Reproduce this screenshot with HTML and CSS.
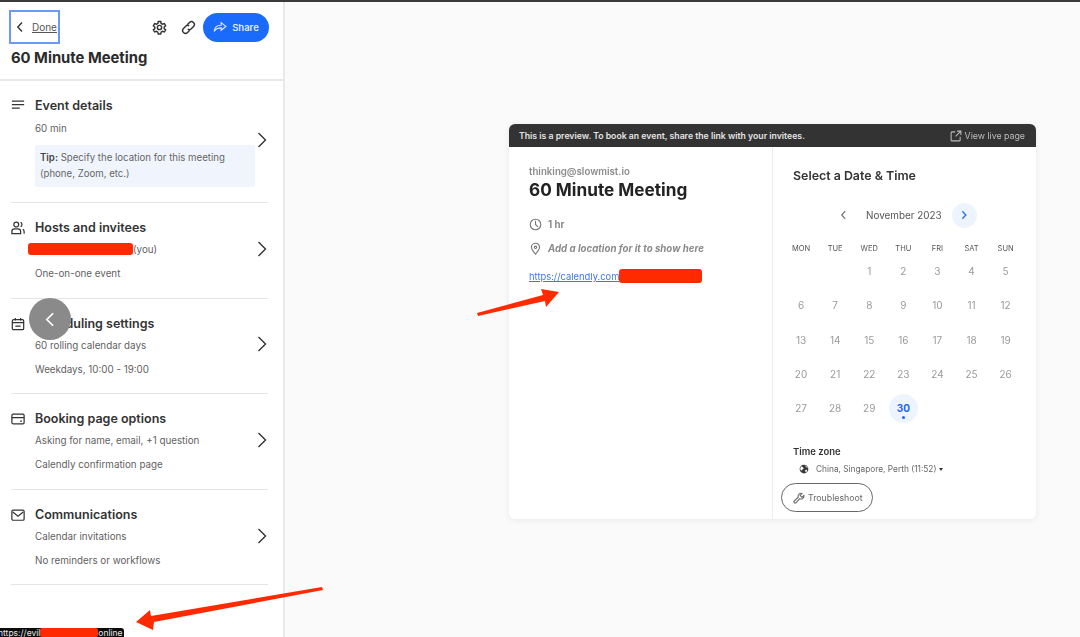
FILE: index.html
```html
<!DOCTYPE html>
<html lang="en">
<head>
  <meta charset="UTF-8">
  <title>60 Minute Meeting</title>
  <link rel="stylesheet" href="styles.css">
</head>
<body>
  <div class="page">
    <!-- SIDEBAR -->
    <aside class="sidebar">
      <header class="side-head">
        <div class="side-top">
          <a class="done">
            <svg class="ico-back" viewBox="0 0 8 12"><path d="M6 1.500 1.800 6 6 10.500"/></svg>
            <span>Done</span>
          </a>
          <svg class="ico-tool ico-gear" viewBox="0 0 24 24">
            <path d="M10 2.500h4l.6 3 2.300 1.300 2.900-1 2 3.400-2.300 2 0 2.600 2.300 2-2 3.400-2.900-1-2.300 1.300-.6 3h-4l-.6-3-2.300-1.300-2.900 1-2-3.400 2.300-2 0-2.600-2.300-2 2-3.400 2.900 1 2.300-1.300z"/>
            <circle cx="12" cy="12" r="3.400"/>
          </svg>
          <svg class="ico-tool ico-link" viewBox="0 0 24 24">
            <path d="M10 7.500 13.500 4a4.200 4.200 0 0 1 6.500 6.500L16.500 14a4.200 4.200 0 0 1-5.500.5"/>
            <path d="M14 16.500 10.500 20A4.200 4.200 0 0 1 4 13.500L7.500 10a4.200 4.200 0 0 1 5.500-.5"/>
          </svg>
          <button class="share">
            <svg viewBox="0 0 24 24"><path d="M14 4.500 22 11l-8 6.500v-4c-5 0-9 1-12 6 .5-6.500 5-10.500 12-10.500z"/></svg>
            Share
          </button>
        </div>
        <h1>60 Minute Meeting</h1>
      </header>

      <section class="item item-first">
        <svg class="item-ico" viewBox="0 0 16 16"><path d="M1 3.500h14M1 7.500h14M1 11.500h9"/></svg>
        <div class="item-body">
          <h2>Event details</h2>
          <p>60 min</p>
          <div class="tip"><b>Tip:</b> Specify the location for this meeting (phone, Zoom, etc.)</div>
        </div>
        <svg class="item-arrow" viewBox="0 0 10 16"><path d="M1.500 1 8.500 8l-7 7"/></svg>
      </section>

      <section class="item">
        <svg class="item-ico" viewBox="0 0 16 16"><circle cx="6" cy="4" r="2.800"/><path d="M1 14.500v-2.500a3 3 0 0 1 3-3h4a3 3 0 0 1 3 3v2.500zM11 1.500a2.800 2.800 0 0 1 0 5M13.500 9.500a3 3 0 0 1 1.500 2.500v2.500"/></svg>
        <div class="item-body">
          <h2>Hosts and invitees</h2>
          <p><span class="redact redact-host"></span>(you)</p>
          <p>One-on-one event</p>
        </div>
        <svg class="item-arrow" viewBox="0 0 10 16"><path d="M1.500 1 8.500 8l-7 7"/></svg>
      </section>

      <section class="item">
        <svg class="item-ico" viewBox="0 0 16 16"><rect x="1.500" y="3" width="13" height="11.500" rx="1.500"/><path d="M1.500 6.500h13M5 1v3M11 1v3M5 10.500h6"/></svg>
        <div class="item-body">
          <h2>Scheduling settings</h2>
          <p>60 rolling calendar days</p>
          <p>Weekdays, 10:00 - 19:00</p>
        </div>
        <svg class="item-arrow" viewBox="0 0 10 16"><path d="M1.500 1 8.500 8l-7 7"/></svg>
      </section>

      <section class="item">
        <svg class="item-ico" viewBox="0 0 16 16"><rect x="1" y="2.500" width="14" height="11" rx="1.500"/><path d="M1 6.500h14M10.500 10.500h2"/></svg>
        <div class="item-body">
          <h2>Booking page options</h2>
          <p>Asking for name, email, +1 question</p>
          <p>Calendly confirmation page</p>
        </div>
        <svg class="item-arrow" viewBox="0 0 10 16"><path d="M1.500 1 8.500 8l-7 7"/></svg>
      </section>

      <section class="item">
        <svg class="item-ico" viewBox="0 0 16 16"><rect x="1" y="2.500" width="14" height="11.500" rx="1.500"/><path d="m2 4.500 6 5 6-5"/></svg>
        <div class="item-body">
          <h2>Communications</h2>
          <p>Calendar invitations</p>
          <p>No reminders or workflows</p>
        </div>
        <svg class="item-arrow" viewBox="0 0 10 16"><path d="M1.500 1 8.500 8l-7 7"/></svg>
      </section>
    </aside>

    <!-- PREVIEW -->
    <main class="preview">
      <div class="card">
        <div class="card-bar">
          <b>This is a preview. To book an event, share the link with your invitees.</b>
          <span class="live">
            <svg viewBox="0 0 16 16"><path d="M7 2.500H2.500a1 1 0 0 0-1 1v10a1 1 0 0 0 1 1h10a1 1 0 0 0 1-1V9M9.500 1.500h5v5M14.500 1.500 7.500 8.500"/></svg>
            View live page
          </span>
        </div>
        <div class="card-body">
          <div class="pane-info">
            <div class="owner">thinking@slowmist.io</div>
            <div class="meeting">60 Minute Meeting</div>
            <div class="fact">
              <svg viewBox="0 0 16 16"><circle cx="8" cy="8" r="6.500"/><path d="M8 3.500V8l3 3"/></svg>
              <b>1 hr</b>
            </div>
            <div class="fact fact-loc">
              <svg viewBox="0 0 16 16"><path d="M8 15c-3-3.500-5-6-5-8.500a5 5 0 0 1 10 0C13 9 11 11.500 8 15z"/><circle cx="8" cy="6.500" r="1.500"/></svg>
              <b><i>Add a location for it to show here</i></b>
            </div>
            <div class="link-row"><a>https://calendly.com</a><span class="redact redact-link"></span></div>
          </div>
          <div class="pane-cal">
            <h3>Select a Date &amp; Time</h3>
            <div class="month">
              <svg class="month-prev" viewBox="0 0 8 12"><path d="M6 1.500 1.800 6 6 10.500"/></svg>
              <span>November 2023</span>
              <span class="month-next"><svg viewBox="0 0 8 12"><path d="M2 1.500 6.200 6 2 10.500"/></svg></span>
            </div>
            <div class="weekdays">
              <div>MON</div><div>TUE</div><div>WED</div><div>THU</div><div>FRI</div><div>SAT</div><div>SUN</div>
            </div>
            <div class="days">
              <div></div><div></div>
              <div>1</div><div>2</div><div>3</div><div>4</div><div>5</div>
              <div>6</div><div>7</div><div>8</div><div>9</div><div>10</div><div>11</div><div>12</div>
              <div>13</div><div>14</div><div>15</div><div>16</div><div>17</div><div>18</div><div>19</div>
              <div>20</div><div>21</div><div>22</div><div>23</div><div>24</div><div>25</div><div>26</div>
              <div>27</div><div>28</div><div>29</div><div class="today">30</div>
            </div>
            <div class="tz-label">Time zone</div>
            <div class="tz">
              <svg viewBox="0 0 16 16"><circle cx="8" cy="8" r="7" fill="#3a3a3a"/><path d="M3 4c2 0 3 1 4 2s0 2-1 2.500-1 2-2 2-2-2-2-3M10 2c0 2 1 2 2 3s2 1 2.500 1M10 10c1-1 3-1 3 0s-1 3-2 3-1-2-1-3z" fill="#fff"/></svg>
              <span>China, Singapore, Perth (11:52)</span>
              <span class="caret"></span>
            </div>
            <button class="trouble">
              <svg viewBox="0 0 16 16"><path d="M14.500 4.500 12 7 9.500 4.500 12 2a4 4 0 0 0-5 5L1.500 12a1.800 1.800 0 0 0 2.500 2.500L9 9a4 4 0 0 0 5.500-4.500z"/></svg>
              Troubleshoot
            </button>
          </div>
        </div>
      </div>
    </main>
  </div>

  <!-- over the page: swipe button, status tooltip, markup arrows -->
  <div class="swipe"><svg viewBox="0 0 8 12"><path d="M6.500 1 1.500 6l5 5"/></svg></div>
  <div class="status">https://evil<span class="redact redact-status"></span>online</div>
  <svg class="marks" viewBox="0 0 1080 637">
    <polygon points="477,313 543,295 541,289 559,292 546,307 545,301 478,316"/>
    <polygon points="322,587 323,590 154,622 153,630 136,622 150,610 151,616"/>
  </svg>
</body>
</html>
```
FILE: styles.css
```css
* { box-sizing: border-box; }
html, body { height: 100%; }
body {
  margin: 0;
  font-family: "Inter", "Liberation Sans", sans-serif;
  color: #3c3c3c;
  background: #fafafa;
  overflow: hidden;
  filter: blur(.35px);
}
svg { fill: none; stroke: currentColor; stroke-width: 1.4; flex: none; }
.page {
  display: flex;
  height: 637px;
  border-top: 2px solid #3a3a3a;
}

/* sidebar */
.sidebar {
  width: 285px;
  flex: none;
  background: #fff;
  border-right: 2px solid #e9e9e9;
}
.side-head {
  height: 79px;
  border-bottom: 2px solid #e8e8e8;
  padding: 8px 14px 0 9px;
}
.side-top { display: flex; align-items: center; height: 34px; }
.done {
  display: flex;
  align-items: center;
  width: 51px;
  height: 34px;
  padding-left: 5px;
  border: 2px solid #6b9af2;
  font-size: 10px;
  color: #555;
  text-decoration: underline;
}
.done span { margin-left: 8px; }
.ico-back { width: 8px; height: 12px; color: #333; }
.ico-tool { width: 15px; height: 15px; color: #333; stroke-width: 2.300; }
.ico-gear { margin-left: 92px; }
.ico-link { margin-left: 14px; }
.share {
  display: flex;
  align-items: center;
  justify-content: center;
  gap: 5px;
  width: 66px;
  height: 29px;
  margin-left: 7px;
  border: 0;
  border-radius: 15px;
  background: #1a6bfb;
  color: #dfe9ff;
  font: 600 9.500px "Inter", sans-serif;
}
.share svg { width: 14px; height: 14px; stroke-width: 2; }
h1 {
  margin: 4px 0 0 2px;
  font-size: 14.800px;
  line-height: 20px;
  font-weight: 700;
  color: #2b2b2b;
}

.item {
  display: flex;
  align-items: center;
  height: 95.600px;
  margin: 0 15px 0 11px;
  border-bottom: 1px solid #e5e5e5;
}
.item-first { height: 122px; }
.item-ico { width: 14px; height: 14px; align-self: flex-start; margin-top: 18px; color: #333; }
.item-first .item-ico { margin-top: 17px; }
.item-body { flex: 1; margin-left: 10px; align-self: flex-start; padding-top: 16px; }
.item h2 {
  margin: 0 0 1px;
  font-size: 12.500px;
  line-height: 18px;
  font-weight: 600;
  color: #333;
}
.item-first h2 { margin-bottom: 2px; }
.item p {
  margin: 0;
  font-size: 9.800px;
  line-height: 24px;
  color: #5f5f5f;
}
.tip {
  width: 220px;
  height: 42px;
  margin-top: 4px;
  padding: 5px;
  background: #f0f5fd;
  border-radius: 2px;
  font-size: 9.650px;
  line-height: 16px;
  color: #666;
}
.tip b { color: #444; font-weight: 600; }
.item-arrow { width: 10px; height: 16px; color: #333; margin: 0 1px 3px 0; }

.redact { display: inline-block; background: #ff2a00; border-radius: 3px; }
.redact-host { width: 105px; height: 12px; margin-left: -7px; vertical-align: -2px; }
.redact-link { width: 83px; height: 14px; vertical-align: -3px; }
.redact-status { width: 58px; height: 9px; border-radius: 2px; vertical-align: -1px; }

/* preview card */
.preview { flex: 1; padding: 122px 0 0 224px; }
.card {
  width: 527px;
  height: 395px;
  background: #fff;
  border-radius: 6px;
  box-shadow: 0 1px 6px rgba(0, 0, 0, .08);
  overflow: hidden;
}
.card-bar {
  display: flex;
  justify-content: space-between;
  align-items: center;
  height: 23px;
  padding: 0 11px 0 10px;
  background: #333;
  color: #e4e4e4;
  font-size: 8.700px;
}
.card-bar b { font-weight: 600; }
.live { display: flex; align-items: center; gap: 3px; color: #bdbdbd; font-size: 8.800px; }
.live svg { width: 12px; height: 12px; }
.card-body { display: flex; height: 372px; }
.pane-info { width: 264px; padding: 18px 20px 0; border-right: 1px solid #ececec; }
.owner { font-size: 9.700px; line-height: 14px; font-weight: 600; color: #8c8c8c; }
.meeting { font-size: 17.200px; line-height: 22px; font-weight: 700; color: #222; margin-top: 0; }
.fact {
  display: flex;
  align-items: center;
  gap: 6px;
  height: 24px;
  margin-top: 11px;
  font-size: 9.700px;
  color: #8a8a8a;
}
.fact svg { width: 13px; height: 13px; color: #777; }
.fact-loc { margin-top: 0; }
.link-row { margin-top: 9px; font-size: 9.400px; line-height: 16px; color: #3b78e7; }
.link-row a { text-decoration: underline; }

.pane-cal { flex: 1; padding: 0 0 0 11px; }
.pane-cal h3 {
  margin: 20px 0 0 9px;
  font-size: 12.400px;
  line-height: 18px;
  font-weight: 600;
  color: #333;
}
.month {
  display: flex;
  align-items: center;
  height: 26px;
  margin-top: 17px;
  margin-left: 56px;
  font-size: 9.900px;
  color: #555;
}
.month-prev { width: 7px; height: 10px; color: #777; margin-right: 19px; }
.month-next {
  display: flex;
  align-items: center;
  justify-content: center;
  width: 25px;
  height: 25px;
  margin-left: 10px;
  border-radius: 50%;
  background: #eef4fe;
  color: #2a6ef0;
}
.month-next svg { width: 8px; height: 10px; stroke-width: 1.600; }
.weekdays, .days {
  display: grid;
  grid-template-columns: repeat(7, 34.100px);
  text-align: center;
}
.weekdays { margin-top: 11px; height: 15px; line-height: 20px; font-size: 7.500px; color: #555; }
.days { grid-auto-rows: 34.250px; font-size: 10px; color: #9a9a9a; }
.days div { display: flex; align-items: center; justify-content: center; }
.days .today {
  position: relative;
  width: 29px;
  height: 29px;
  margin: 2.500px;
  border-radius: 50%;
  background: #eef4fe;
  color: #1f66f0;
  font-weight: 700;
}
.today::after {
  content: "";
  position: absolute;
  left: 13px;
  bottom: 4px;
  width: 3px;
  height: 3px;
  border-radius: 50%;
  background: #1f66f0;
}
.tz-label { margin: 20px 0 0 9px; font-size: 9.500px; line-height: 14px; font-weight: 600; color: #333; }
.tz { display: flex; align-items: center; height: 18px; margin: 1px 0 0 15px; font-size: 8.300px; color: #666; }
.tz svg { width: 10px; height: 10px; stroke: none; }
.tz span:first-of-type { margin-left: 7px; }
.caret {
  margin-left: 3px;
  border-left: 2.500px solid transparent;
  border-right: 2.500px solid transparent;
  border-top: 3px solid #333;
}
.trouble {
  display: flex;
  align-items: center;
  gap: 3px;
  width: 92px;
  height: 29px;
  margin: 5px 0 0 -3px;
  padding: 0 0 0 11px;
  border: 1px solid #666;
  border-radius: 15px;
  background: #fff;
  color: #666;
  font: 8.800px "Inter", sans-serif;
}
.trouble svg { width: 12px; height: 12px; }

/* overlays */
.swipe {
  position: absolute;
  left: 29px;
  top: 298px;
  width: 42px;
  height: 42px;
  display: flex;
  align-items: center;
  justify-content: center;
  border-radius: 50%;
  background: #8a8a8a;
  color: #fff;
}
.swipe svg { width: 10px; height: 15px; }
.status {
  position: absolute;
  left: -2px;
  top: 628px;
  width: 126px;
  height: 12px;
  padding-left: 0;
  background: #0c0c0c;
  border-radius: 0 3px 3px 0;
  color: #e6e6e6;
  font-size: 8.500px;
  line-height: 11px;
  white-space: nowrap;
}
.marks { position: absolute; left: 0; top: 0; width: 1080px; height: 637px; stroke: none; fill: #ff2a00; pointer-events: none; }
```
